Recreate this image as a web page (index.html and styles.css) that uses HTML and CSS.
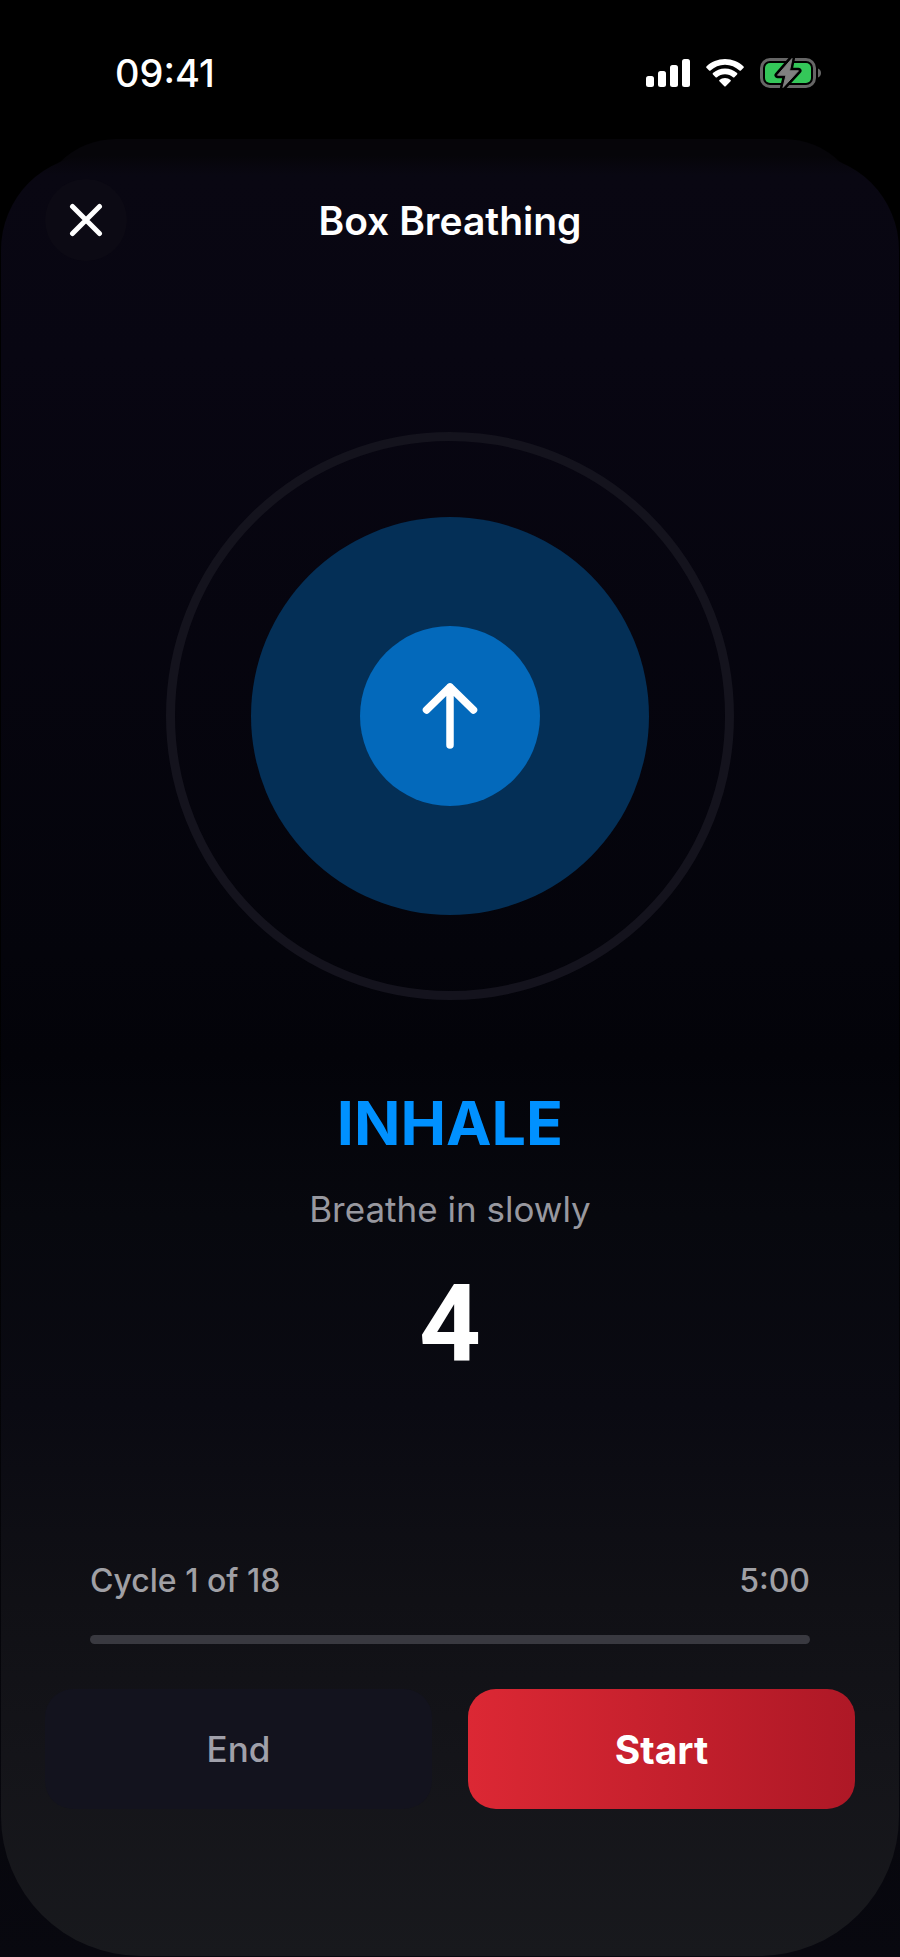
FILE: index.html
```html
<!DOCTYPE html>
<html lang="en">
<head>
    <meta charset="UTF-8">
    <meta name="viewport" content="width=device-width, initial-scale=1.0">
    <title>Box Breathing</title>
    <link rel="stylesheet" href="styles.css">
</head>
<body>

    <!-- Status Bar -->
    <div class="status-bar">
        <time class="clock">09:41</time>
        <div class="status-icons">
            <svg width="44" height="28" viewBox="0 0 44 28" fill="#fff" aria-hidden="true">
                <rect x="0" y="17" width="8" height="11" rx="2.5"/>
                <rect x="12" y="12" width="8" height="16" rx="2.5"/>
                <rect x="24" y="6" width="8" height="22" rx="2.5"/>
                <rect x="36" y="0" width="8" height="28" rx="2.5"/>
            </svg>
            <svg width="38" height="28" viewBox="0 0 38 28" fill="#fff" aria-hidden="true">
                <path d="M19 0C26.2 0 32.8 2.8 37.6 7.4c.4.4.4 1 0 1.400l-2.700 2.700c-.4.4-1 .4-1.400 0C29.700 7.900 24.600 5.700 19 5.700S8.300 7.900 4.500 11.500c-.4.4-1 .4-1.400 0L.4 8.800c-.4-.4-.4-1 0-1.400C5.200 2.800 11.800 0 19 0z"/>
                <path d="M19 9.400c4.700 0 8.900 1.800 12.100 4.700.4.4.4 1 0 1.400l-2.700 2.700c-.4.4-1 .4-1.400 0-2.100-1.900-4.900-3-8-3s-5.900 1.100-8 3c-.4.4-1 .4-1.400 0l-2.700-2.700c-.4-.4-.4-1 0-1.400C10.100 11.200 14.300 9.400 19 9.400z"/>
                <path d="M19 18.900c2.100 0 4.100.8 5.600 2 .4.4.4 1 0 1.400l-4.900 5c-.4.4-1 .4-1.400 0l-4.900-5c-.4-.4-.4-1 0-1.400 1.500-1.200 3.500-2 5.600-2z"/>
            </svg>
            <svg width="61" height="30" viewBox="0 0 61 30" aria-hidden="true">
                <rect x="1.500" y="1.500" width="53" height="27" rx="8.500" fill="none" stroke="#666" stroke-width="3"/>
                <rect x="5" y="5" width="46" height="20" rx="5" fill="#34c759"/>
                <path d="M58 10.500c2 .8 3 2.500 3 4.500s-1 3.700-3 4.500z" fill="#666"/>
                <path d="M32 .5L17.500 17.200h8.500L23 29.500 38.500 12.800h-9z" fill="#808080" stroke="#000" stroke-width="6" stroke-linejoin="round"/>
                <path d="M32 .5L17.500 17.200h8.500L23 29.500 38.500 12.800h-9z" fill="#808080" stroke="#808080" stroke-width="1" stroke-linejoin="round"/>
            </svg>
        </div>
    </div>

    <!-- Breathing Sheet -->
    <main class="sheet">
        <header class="sheet-header">
            <button class="close-button" aria-label="Close">
                <svg width="34" height="34" viewBox="0 0 34 34" fill="none" stroke="#fff" stroke-width="5" stroke-linecap="round" aria-hidden="true">
                    <path d="M3.500 3.500l27 27M30.500 3.500l-27 27"/>
                </svg>
            </button>
            <h1>Box Breathing</h1>
        </header>

        <div class="ring">
            <div class="circle-outer">
                <div class="circle-inner">
                    <svg width="56" height="68" viewBox="0 0 56 68" fill="none" stroke="#fff" stroke-width="7.500" stroke-linecap="round" stroke-linejoin="round" aria-hidden="true">
                        <path d="M28 63V5M4.500 28L28 5l23.500 23"/>
                    </svg>
                </div>
            </div>
        </div>

        <section class="phase">
            <h2>INHALE</h2>
            <p class="hint">Breathe in slowly</p>
            <p class="count">4</p>
        </section>

        <section class="session">
            <div class="session-info">
                <label for="sessionProgress">Cycle 1 of 18</label>
                <span>5:00</span>
            </div>
            <progress id="sessionProgress" value="0" max="18"></progress>
        </section>

        <div class="actions">
            <button class="end-button">End</button>
            <button class="start-button">Start</button>
        </div>
    </main>

</body>
</html>
```
FILE: styles.css
```css
/* Page */
* {
    box-sizing: border-box;
}

body {
    display: flex;
    flex-direction: column;
    min-height: 100vh;
    margin: 0;
    background: linear-gradient(#000 50%, #08080f);
    color: #fff;
    font-family: Inter, 'Liberation Sans', sans-serif;
}

h1, h2, p {
    margin: 0;
}

button {
    border: none;
    padding: 0;
    color: inherit;
    font-family: inherit;
    cursor: pointer;
}

svg {
    display: block;
}

/* Status Bar */
.status-bar {
    display: flex;
    align-items: center;
    justify-content: space-between;
    height: 155px;
    padding: 0 79px 9px 115px;
}

.clock {
    font-size: 38px;
    font-weight: 500;
}

.status-icons {
    display: flex;
    align-items: center;
    gap: 16px;
}

/* Sheet */
.sheet {
    position: relative;
    flex: 1;
    display: flex;
    flex-direction: column;
    margin: 0 1px 1px;
    padding: 24px 44px 147px;
    border-radius: 95px 95px 140px 140px;
    background: linear-gradient(#060509, #090712 20px, #080612 200px, #04040b 800px, #030309 900px, #07080e 1060px, #0a0a12 1250px, #101015 1445px, #141419 1600px, #18191d);
}

/* Edge of the sheet behind */
.sheet::before {
    content: "";
    position: absolute;
    z-index: -1;
    top: -16px;
    left: 35px;
    right: 35px;
    height: 120px;
    border-radius: 80px 80px 0 0;
    background: #060509;
}

.sheet-header {
    display: grid;
    grid-template-columns: 82px 1fr 82px;
    align-items: center;
}

.close-button {
    display: flex;
    align-items: center;
    justify-content: center;
    width: 82px;
    height: 82px;
    border-radius: 50%;
    background-color: #0c0a14;
}

.sheet-header h1 {
    font-size: 39px;
    font-weight: 600;
    text-align: center;
}

/* Breathing Circle */
.ring,
.circle-outer,
.circle-inner {
    display: flex;
    align-items: center;
    justify-content: center;
    border-radius: 50%;
}

.ring {
    align-self: center;
    width: 568px;
    height: 568px;
    margin-top: 171px;
    border: 9px solid #14131d;
}

.circle-outer {
    width: 398px;
    height: 398px;
    background-color: #042f56;
}

.circle-inner {
    width: 180px;
    height: 180px;
    background-color: #0369bb;
}

/* Phase */
.phase {
    display: flex;
    flex-direction: column;
    align-items: center;
    margin-top: 87px;
}

.phase h2 {
    color: #0091ff;
    font-size: 61px;
    font-weight: 700;
    line-height: 72px;
}

.hint {
    margin-top: 28px;
    color: #98989f;
    font-size: 35px;
    line-height: 44px;
}

.count {
    margin-top: 29px;
    font-family: Roboto, sans-serif;
    font-size: 108px;
    font-weight: 700;
    line-height: 128px;
}

/* Session Progress */
.session {
    margin-top: auto;
    padding: 0 45px;
}

.session-info {
    display: flex;
    justify-content: space-between;
    color: #a0a0a5;
    font-size: 32px;
    font-weight: 500;
    line-height: 40px;
}

progress {
    display: block;
    width: 100%;
    height: 9px;
    margin-top: 34px;
    border: none;
    border-radius: 5px;
    overflow: hidden;
    appearance: none;
    background-color: #393940;
}

progress::-webkit-progress-bar {
    background-color: #393940;
}

progress::-webkit-progress-value {
    background-color: #0091ff;
}

/* Actions */
.actions {
    display: grid;
    grid-template-columns: 1fr 1fr;
    gap: 36px;
    margin-top: 45px;
}

.actions button {
    height: 120px;
    border-radius: 28px;
}

.end-button {
    background-color: #13131e;
    color: #a0a0aa;
    font-size: 35px;
    font-weight: 500;
}

.start-button {
    background: linear-gradient(to right, #dc2834, #ae1826);
    font-size: 39px;
    font-weight: 700;
}
```
